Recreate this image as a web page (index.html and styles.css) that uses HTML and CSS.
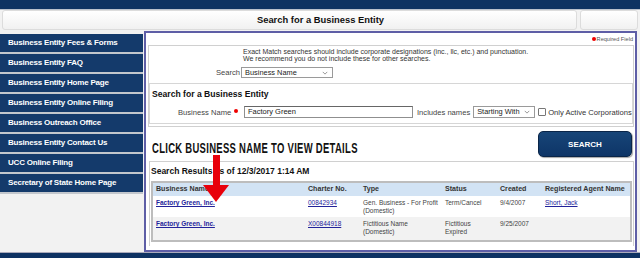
FILE: index.html
```html
<!DOCTYPE html>
<html lang="en">
<head>
<meta charset="utf-8">
<title>Search for a Business Entity</title>
<link rel="stylesheet" href="styles.css">
</head>
<body>
<div class="topbar"></div>
<div class="header">
  <div class="hdr-title">Search for a Business Entity</div>
  <div class="hdr-side"></div>
</div>
<div class="main">
  <nav class="nav">
    <a href="#">Business Entity Fees &amp; Forms</a>
    <a href="#">Business Entity FAQ</a>
    <a href="#">Business Entity Home Page</a>
    <a href="#">Business Entity Online Filing</a>
    <a href="#">Business Outreach Office</a>
    <a href="#">Business Entity Contact Us</a>
    <a href="#">UCC Online Filing</a>
    <a href="#">Secretary of State Home Page</a>
  </nav>
  <section class="panel">
    <div class="req"><span class="dot"></span>Required Field</div>
    <div class="box1">
      <p class="note">Exact Match searches should include corporate designations (inc., llc, etc.) and punctuation.<br>We recommend you do not include these for other searches.</p>
      <div class="search-row">
        <span class="lbl">Search</span>
        <div class="select sel-type">Business Name<svg class="chev" viewBox="0 0 8 5"><polyline points="1,1 4,4 7,1"/></svg></div>
      </div>
      <div class="box2">
        <h2 class="box2-title">Search for a Business Entity</h2>
        <div class="name-row">
          <span class="lbl name-lbl">Business Name</span><span class="rdot"></span>
          <div class="input">Factory Green</div>
          <span class="lbl">Includes names</span>
          <div class="select sel-mode">Starting With<svg class="chev" viewBox="0 0 8 5"><polyline points="1,1 4,4 7,1"/></svg></div>
          <span class="check"></span>
          <span class="lbl check-lbl">Only Active Corporations</span>
        </div>
      </div>
    </div>
    <div class="cta-row">
      <div class="cta"><span class="cta-text">CLICK BUSINESS NAME TO VIEW DETAILS</span></div>
      <button class="btn" type="button">SEARCH</button>
    </div>
    <div class="box3">
      <div class="results-title">Search Results as of 12/3/2017 1:14 AM</div>
      <table class="results">
        <thead>
          <tr><th class="c1">Business Name</th><th class="c2">Charter No.</th><th class="c3">Type</th><th class="c4">Status</th><th class="c5">Created</th><th class="c6">Registered Agent Name</th></tr>
        </thead>
        <tbody>
          <tr class="r1">
            <td><a class="biz" href="#">Factory Green, Inc.</a></td>
            <td><a href="#">00842934</a></td>
            <td>Gen. Business - For Profit<br>(Domestic)</td>
            <td>Term/Cancel</td>
            <td>9/4/2007</td>
            <td><a href="#">Short, Jack</a></td>
          </tr>
          <tr class="r2">
            <td><a class="biz" href="#">Factory Green, Inc.</a></td>
            <td><a href="#">X00844918</a></td>
            <td>Fictitious Name<br>(Domestic)</td>
            <td>Fictitious<br>Expired</td>
            <td>9/25/2007</td>
            <td></td>
          </tr>
        </tbody>
      </table>
    </div>
    <svg class="arrow" viewBox="0 0 26 48" width="26" height="48">
      <rect x="10" y="0" width="7" height="32" fill="#e8000b"/>
      <polygon points="0,30 26,30 13,47" fill="#e8000b"/>
    </svg>
  </section>
</div>
<div class="bottombar"></div>
</body>
</html>
```
FILE: styles.css
```css
* { box-sizing: border-box; }
html, body { margin: 0; padding: 0; }
body {
  width: 640px;
  height: 258px;
  overflow: hidden;
  background: #f2f2f2;
  font-family: "Liberation Sans", Arial, sans-serif;
  color: #333;
}

.topbar {
  height: 10px;
  background: #0d3262;
  border-bottom: 1px solid #b8c0cc;
}

.header {
  display: flex;
  gap: 3px;
  padding: 0 2px 0 2px;
  height: 21px;
}
.hdr-title, .hdr-side {
  height: 20px;
  border: 1px solid #dcdcdc;
  border-radius: 3px;
  background: linear-gradient(#ffffff, #f1f1f1);
}
.hdr-title {
  flex: 1;
  padding-left: 62px;
  text-align: center;
  font-weight: bold;
  font-size: 9.4px;
  line-height: 18px;
  color: #111;
}
.hdr-side { width: 58px; }

.main {
  display: flex;
  height: 221px;
}

.nav {
  width: 143px;
  padding-top: 3px;
  display: flex;
  flex-direction: column;
}
.nav a {
  display: block;
  height: 20px;
  padding-left: 8px;
  background: #143a6b;
  border-bottom: 2px solid #c3c7cd;
  color: #fff;
  font-weight: bold;
  font-size: 8px;
  letter-spacing: -0.2px;
  line-height: 18px;
  text-decoration: none;
  white-space: nowrap;
}

.panel {
  position: relative;
  flex: 1;
  margin-left: 1px;
  margin-right: 3px;
  border: 2px solid #5e5ea6;
  background: #fff;
  display: flex;
  flex-direction: column;
}

.req {
  height: 12px;
  display: flex;
  align-items: center;
  justify-content: flex-end;
  padding-right: 2px;
  font-size: 5.6px;
  color: #555;
  gap: 1px;
}
.dot {
  width: 4px;
  height: 4px;
  border-radius: 50%;
  background: #e00;
}

.box1 {
  margin: 0 1px 0 2px;
  height: 82px;
  border: 1px solid #d0d0d0;
  padding: 2px 0 0 0;
}
.note {
  margin: 0 0 0 94px;
  font-size: 7px;
  line-height: 7px;
  color: #333;
}
.search-row {
  display: flex;
  align-items: center;
  margin-top: 5px;
  padding-left: 67px;
  gap: 1px;
}
.lbl {
  font-size: 7.6px;
  color: #444;
  white-space: nowrap;
  flex-shrink: 0;
}
.select {
  position: relative;
  flex-shrink: 0;
  height: 11px;
  border: 1px solid #9a9a9a;
  font-size: 7.4px;
  line-height: 9px;
  padding-left: 3px;
  color: #222;
  background: #fff;
  white-space: nowrap;
}
.sel-type { width: 92px; }
.sel-mode { width: 62px; }
.chev {
  position: absolute;
  right: 4px;
  top: 3px;
  width: 6px;
  height: 4px;
  fill: none;
  stroke: #777;
  stroke-width: 1;
}

.box2 {
  margin-top: 5px;
  height: 41px;
  border: 1px solid #d6d6d6;
  padding-top: 5px;
}
.box2-title {
  margin: 0 0 0 2px;
  font-size: 8.6px;
  line-height: 10px;
  font-weight: bold;
  color: #111;
}
.name-row {
  display: flex;
  align-items: center;
  margin-top: 7px;
  padding-left: 28px;
  height: 12px;
}
.name-lbl { width: 53px; text-align: right; }
.rdot {
  flex-shrink: 0;
  width: 4px;
  height: 4px;
  border-radius: 50%;
  background: #e00;
  margin: 0 6px 3px 3px;
}
.input {
  flex-shrink: 0;
  width: 169px;
  height: 12px;
  border: 1px solid #8f8f8f;
  border-top-color: #666;
  font-size: 7.5px;
  line-height: 10px;
  padding-left: 3px;
  color: #222;
  margin-right: 4px;
}
.name-row .sel-mode { margin-left: 3px; height: 12px; line-height: 10px; }
.check {
  flex-shrink: 0;
  width: 8px;
  height: 8px;
  border: 1px solid #777;
  border-radius: 1px;
  margin: 0 2px 0 3px;
}
.check-lbl { color: #333; }

.cta-row {
  height: 34px;
  display: flex;
  align-items: center;
  justify-content: space-between;
  padding: 0 3px 0 6px;
}
.cta {
  width: 210px;
  height: 14px;
  margin-top: 3px;
}
.cta-text {
  display: inline-block;
  white-space: nowrap;
  font-weight: bold;
  font-size: 15.5px;
  line-height: 14px;
  letter-spacing: 0.5px;
  color: #111;
  transform: scaleX(0.61);
  transform-origin: left center;
}
.btn {
  width: 94px;
  height: 26px;
  border: 1px solid #0a2548;
  border-radius: 5px;
  background: linear-gradient(#174578, #0e3567);
  box-shadow: 1px 1px 1px rgba(0,0,0,0.35);
  color: #fff;
  font-family: "Liberation Sans", Arial, sans-serif;
  font-weight: bold;
  font-size: 8px;
  padding: 0;
}

.box3 {
  margin: 0 1px 0 3px;
  height: 85px;
  border: 1px solid #d0d0d0;
  border-bottom: none;
  padding: 4px 1px 0 1px;
}
.results-title {
  font-size: 8.5px;
  font-weight: bold;
  line-height: 11px;
  color: #111;
}
.results {
  margin-top: 4px;
  width: 481px;
  border-collapse: separate;
  border-spacing: 0;
  border: 2px solid #bdbdbd;
  table-layout: fixed;
}
.results th, .results td {
  text-align: left;
  vertical-align: top;
  padding: 0 0 0 3px;
}
.results th {
  height: 13px;
  background: #d2e3f4;
  font-size: 7.1px;
  line-height: 13px;
  color: #333;
  font-weight: bold;
}
.results td {
  font-size: 6.5px;
  line-height: 8px;
  color: #444;
}
.r1 td { height: 21px; padding-top: 3px; background: #fff; }
.r2 td { height: 23px; padding-top: 3px; background: #f2f2f2; }
.results a { color: #23239a; text-decoration: underline; }
.results a.biz { font-weight: bold; }
.c1 { width: 152px; }
.c2 { width: 55px; }
.c3 { width: 82px; }
.c4 { width: 55px; }
.c5 { width: 45px; }
.c6 { width: 88px; }

.arrow {
  position: absolute;
  left: 57px;
  top: 122px;
}

.bottombar {
  height: 6px;
  background: #0d3262;
  border-top: 1px solid #aab;
}
```
